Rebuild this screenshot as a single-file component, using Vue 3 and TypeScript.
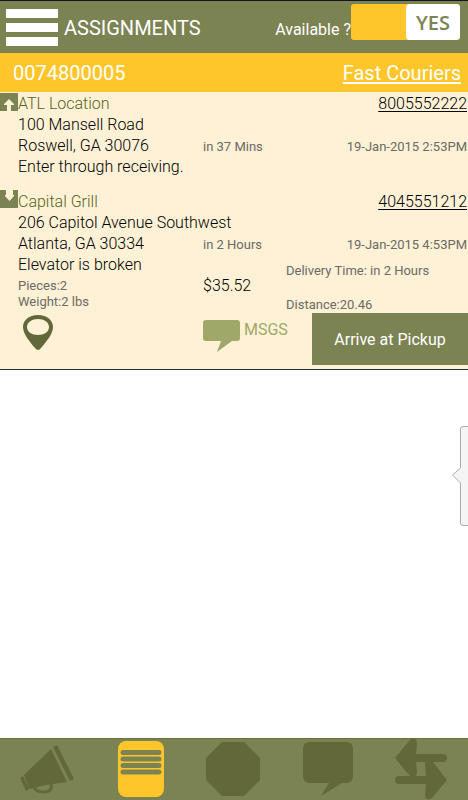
<script setup lang="ts">
import { ref } from 'vue'

interface Stop {
  kind: 'pickup' | 'dropoff'
  name: string
  phone: string
  street: string
  city: string
  due: string
  time: string
}

const stops: Stop[] = [
  {
    kind: 'pickup',
    name: 'ATL Location',
    phone: '8005552222',
    street: '100 Mansell Road',
    city: 'Roswell, GA 30076',
    due: 'in 37 Mins',
    time: '19-Jan-2015 2:53PM',
  },
  {
    kind: 'dropoff',
    name: 'Capital Grill',
    phone: '4045551212',
    street: '206 Capitol Avenue Southwest',
    city: 'Atlanta, GA 30334',
    due: 'in 2 Hours',
    time: '19-Jan-2015 4:53PM',
  },
]

const available = ref(true)
</script>

<template>
  <div class="page">
    <header class="topbar">
      <button class="menu" type="button" aria-label="Menu">
        <span></span><span></span><span></span>
      </button>
      <h1>ASSIGNMENTS</h1>
      <label class="avail-label" for="available">Available ?</label>
      <button
        id="available"
        class="toggle"
        :class="{ off: !available }"
        type="button"
        role="switch"
        :aria-checked="available"
        @click="available = !available"
      >
        <span class="knob">{{ available ? 'YES' : 'NO' }}</span>
      </button>
    </header>

    <main>
      <div class="order">
        <span>0074800005</span>
        <a href="#courier">Fast Couriers</a>
      </div>

      <article class="job">
        <section v-for="stop in stops" :key="stop.phone" class="stop">
          <svg class="stop-icon" viewBox="0 0 18 18" aria-hidden="true">
            <path fill="#7b8353" d="M0 0h18v18H0z" />
            <path v-if="stop.kind === 'pickup'" fill="#fef1d5" d="M9 6l5 5v1h-3v6H7v-6H4v-1z" />
            <path v-else fill="#fef1d5" d="M6 0h7v5h1v1l-4.500 5L5 6V5h1z" />
          </svg>
          <div class="line">
            <span class="name">{{ stop.name }}</span>
            <a class="phone" :href="'tel:' + stop.phone">{{ stop.phone }}</a>
          </div>
          <div class="line">{{ stop.street }}</div>
          <div class="line cols">
            <span>{{ stop.city }}</span>
            <span class="small">{{ stop.due }}</span>
            <span class="small">{{ stop.time }}</span>
          </div>
          <div v-if="stop.kind === 'pickup'" class="line">Enter through receiving.</div>
        </section>

        <section class="summary">
          <div>
            <div class="line">Elevator is broken</div>
            <div class="parcel">Pieces:2<br />Weight:2 lbs</div>
          </div>
          <div class="price">$35.52</div>
          <div class="trip">
            <span>Delivery Time: in 2 Hours</span>
            <span>Distance:20.46</span>
          </div>
        </section>

        <div class="actions">
          <button class="pin" type="button" aria-label="Map">
            <svg width="30" height="36" viewBox="0 0 30 36">
              <path
                fill="#626838"
                fill-rule="evenodd"
                d="M15 0C6 0 0 5 0 12c0 7 7 15 12 21q3 4 6 0c5-6 12-14 12-21C30 5 24 0 15 0zM15 4c6 0 11 3 11 8s-5 8-11 8-11-3-11-8 5-8 11-8z"
              />
            </svg>
          </button>
          <button class="msgs" type="button">
            <svg width="37" height="33" viewBox="0 0 37 33" aria-hidden="true">
              <path
                fill="#9fa869"
                d="M3 0h31q3 0 3 3v15q0 3-3 3h-5L14 32l4-11H3q-3 0-3-3V3q0-3 3-3z"
              />
            </svg>
            <span>MSGS</span>
          </button>
          <button class="arrive" type="button">Arrive at Pickup</button>
        </div>
      </article>

      <div class="drawer">
        <button type="button" aria-label="Open panel">
          <svg width="16" height="102" viewBox="0 0 16 102">
            <path
              fill="#f5f5f5"
              stroke="#a9adb0"
              d="M18 1.500H11q-2.500 0-2.500 2.500v39L.5 50l8 8v40q0 2.500 2.500 2.500h7"
            />
          </svg>
        </button>
      </div>
    </main>

    <nav class="tabs">
      <a href="#announce" aria-label="Announcements">
        <svg width="56" height="58" viewBox="0 0 56 58">
          <g fill="#626838">
            <path d="M0 39l3-2 6 13-3 2z" />
            <path d="M4 36L31 10l16 33-21 3-17 4z" />
            <path d="M33 8l4-2 17 34-4 2z" />
          </g>
          <path fill="none" stroke="#626838" stroke-width="3" d="M14 48q2 5 9 5c8 0 9-3 8-8" />
        </svg>
      </a>
      <a href="#assignments" aria-label="Assignments" aria-current="page">
        <svg width="48" height="58" viewBox="-1 0 48 58">
          <rect y="2" width="46" height="56" rx="8" fill="#ffc62c" />
          <path
            stroke="#7b8353"
            stroke-width="5"
            stroke-linecap="round"
            d="M5 13.500h36M5 20h36M5 26.500h36M5 33h36"
          />
        </svg>
      </a>
      <a href="#stop" aria-label="Stop">
        <svg width="56" height="58" viewBox="0 0 56 58">
          <path fill="#626838" d="M17 3h22l16 16v22L39 57H17L1 41V19z" />
        </svg>
      </a>
      <a href="#messages" aria-label="Messages">
        <svg width="52" height="58" viewBox="0 0 52 58">
          <path
            fill="#626838"
            d="M8 3h36q7 0 7 7v27q0 7-7 7h-4L19 57l8-13H8q-7 0-7-7V10q0-7 7-7z"
          />
        </svg>
      </a>
      <a href="#transfer" aria-label="Transfer">
        <svg width="54" height="61" viewBox="0 0 54 61">
          <g fill="#626838">
            <path d="M1 19L16 1q2-3 5-1 2 1 2 4l-1 11h27q4 0 4 4t-4 4H22l1 10q0 4-3 5-3 0-5-2z" />
            <path d="M53 41L38 59q-2 2-5 1-2-1-2-4l1-11H5q-4 0-4-4t4-4h27l-1-11q0-4 3-5 3 0 5 2z" />
          </g>
        </svg>
      </a>
    </nav>
  </div>
</template>

<style>
body {
  background: #fff;
}
</style>

<style scoped>
.page {
  min-height: 100vh;
  display: flex;
  flex-direction: column;
  font-family: Roboto, sans-serif;
  color: #111;
}
button {
  border: 0;
  padding: 0;
  background: none;
  font: inherit;
  color: inherit;
  cursor: pointer;
}
svg {
  display: block;
}
.topbar {
  height: 52px;
  display: flex;
  align-items: center;
  padding: 0 8px 0 6px;
  background: #7b8353;
  border-top: 1px solid #15152a;
  color: #fff;
}
.menu {
  display: flex;
  flex-direction: column;
  gap: 5px;
  width: 52px;
}
.menu span {
  height: 9px;
  background: #fff;
}
h1 {
  flex: 1;
  margin: 0 0 0 6px;
  padding-top: 2px;
  font-size: 20px;
  font-weight: 400;
}
.avail-label {
  font-size: 16px;
  padding-top: 4px;
}
.toggle {
  display: flex;
  justify-content: flex-end;
  width: 109px;
  height: 36px;
  margin-bottom: 10px;
  border-radius: 3px;
  background: #ffc62c;
}
.toggle.off {
  justify-content: flex-start;
}
.knob {
  width: 54px;
  line-height: 38px;
  height: 36px;
  border-radius: 4px;
  background: #fff;
  color: #7b8353;
  font-family: "Open Sans", sans-serif;
  font-size: 20px;
  font-weight: 600;
}
main {
  flex: 1;
}
.order {
  display: flex;
  justify-content: space-between;
  padding: 1px 7px 0 13px;
  line-height: 38px;
  font-size: 20px;
  background: #ffc62c;
  color: #fff;
}
.order a {
  color: inherit;
  text-underline-offset: 2px;
}
.job {
  background: #fef1d5;
  border-bottom: 1px solid #26323a;
  padding-bottom: 4px;
}
.stop {
  position: relative;
  padding: 1px 1px 0 18px;
}
.stop + .stop {
  padding-top: 14px;
}
.stop-icon {
  position: absolute;
  left: 0;
  top: 1px;
  width: 18px;
  height: 18px;
}
.stop + .stop .stop-icon {
  top: 13px;
}
.line {
  display: flex;
  justify-content: space-between;
  font-size: 16px;
  font-weight: 300;
  line-height: 21px;
  color: #000;
}
.name {
  color: #55641c;
}
.phone {
  color: #000;
  text-underline-offset: 2px;
}
.cols {
  display: grid;
  grid-template-columns: 185px 1fr auto;
}
.small,
.parcel,
.trip {
  font-size: 13px;
  font-weight: 400;
  color: #6b6a66;
}
.small {
  line-height: 23px;
  height: 21px;
}
.summary {
  display: grid;
  grid-template-columns: 185px 83px 1fr;
  padding-left: 18px;
}
.parcel {
  line-height: 16px;
  padding: 3px 0;
}
.price {
  padding-top: 21px;
  font-size: 16px;
  line-height: 21px;
  font-weight: 300;
  color: #000;
}
.trip {
  display: flex;
  flex-direction: column;
  justify-content: space-between;
  line-height: 16px;
  padding-top: 9px;
}
.actions {
  display: grid;
  grid-template-columns: 180px 1fr 156px;
  padding-left: 23px;
  height: 52px;
}
.pin {
  justify-self: start;
  align-self: start;
  padding-top: 2px;
}
.msgs {
  display: flex;
  align-items: flex-start;
  gap: 4px;
  padding-top: 7px;
  color: #9fa869;
  font-size: 16px;
}
.arrive {
  background: #7b8353;
  color: #fff;
  font-size: 16px;
}
.drawer {
  display: flex;
  justify-content: flex-end;
  padding-top: 55px;
}
.tabs {
  display: flex;
  justify-content: space-between;
  align-items: flex-start;
  height: 61px;
  padding: 0 20px;
  background: #7b8353;
  border-top: 1px solid #68713f;
}
</style>
